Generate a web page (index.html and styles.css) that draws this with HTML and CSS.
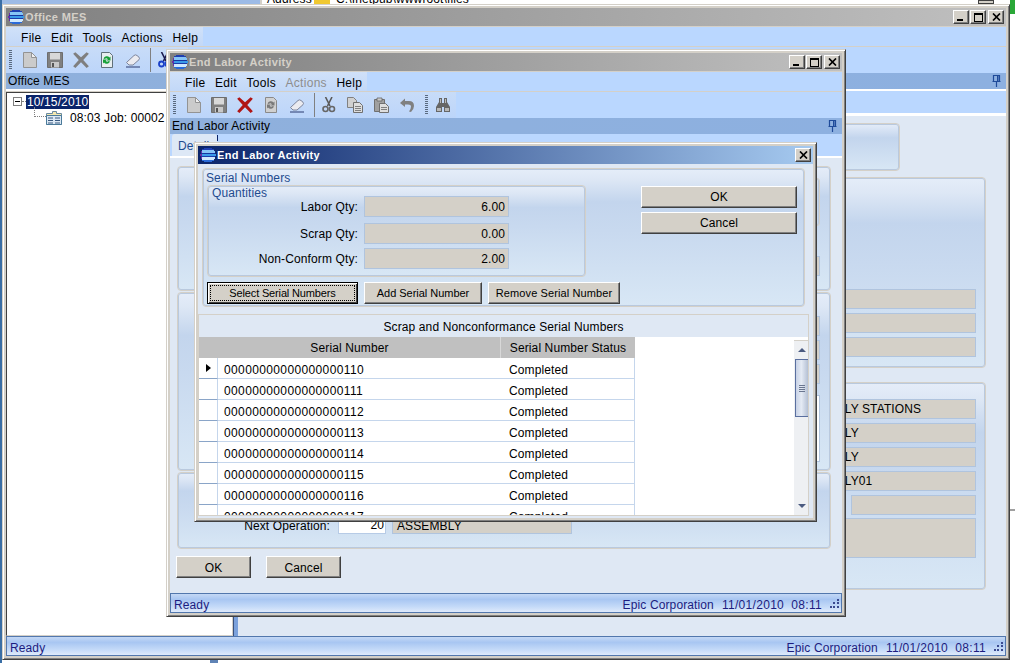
FILE: index.html
```html
<!DOCTYPE html>
<html lang="en">
<head>
<meta charset="utf-8">
<title>Office MES</title>
<link rel="stylesheet" href="styles.css">
</head>
<body>
<svg class="sprite" xmlns="http://www.w3.org/2000/svg">
  <symbol id="logo" viewBox="0 0 16 14">
    <path d="M4 0h8v1h2v1H2V1h2z" fill="#1f3fb0"/>
    <path d="M2 2h12v1h1v2H1V3h1z" fill="#86c4f6"/>
    <path d="M1 5h14v1H1z" fill="#1636a0"/>
    <path d="M0 6h16v2H0z" fill="#3a9ae8"/>
    <path d="M1 8h14v1H1z" fill="#1a3cac"/>
    <path d="M1 9h14v2h-1v1H2v-1H1z" fill="#cfe8fd"/>
    <path d="M2 12h12v1h-2v1H4v-1H2z" fill="#2a6ad8"/>
    <path d="M0 6h2v2H0zM1 3h1v2H1zM1 9h1v2H1z" fill="#6a2ca8"/>
  </symbol>
  <symbol id="g-x" viewBox="0 0 9 8"><path d="M1 .5 8 7.500M8 .5 1 7.500" stroke="#000" stroke-width="1.700" fill="none"/></symbol>
  <symbol id="i-new" viewBox="0 0 14 16"><path d="M.5.500h8l5 5v10H.5z" fill="#cbcbcb" stroke="#939393"/><path d="M8.500.5v5h5z" fill="#efefef" stroke="#939393"/></symbol>
  <symbol id="i-save" viewBox="0 0 16 16"><path d="M.5.500h15v15H.5z" fill="#808080" stroke="#6e6e6e"/><path d="M3 1h10v6.500H3z" fill="#d8d8d8"/><path d="M4 10h8v5.500H4z" fill="#c8c8c8"/><path d="M5 11h2v4H5z" fill="#555"/></symbol>
  <symbol id="i-x" viewBox="0 0 16 16"><path d="M1 2.500 3 1l5 4.500L13 1l2 1.500L10 8l5 5.500-2 1.500-5-5-5 5-2-1.500L6 8z"/></symbol>
  <symbol id="i-ref" viewBox="0 0 16 16"><path d="M2.500.500h8l3 3v12h-11z" fill="#e8eef0" stroke="#60707a"/><path d="M4.500 6.500a3.500 3.500 0 0 1 6-1l1-1v4h-4l1.300-1.300a2 2 0 0 0-3-.2zM11 9.500a3.500 3.500 0 0 1-6 1l-1 1v-4h4L6.700 8.800a2 2 0 0 0 3 .2z" fill="#18a038"/></symbol>
  <symbol id="i-refg" viewBox="0 0 16 16"><path d="M2.500.500h8l3 3v12h-11z" fill="#d0d0d0" stroke="#8a8a8a"/><path d="M4.500 6.500a3.500 3.500 0 0 1 6-1l1-1v4h-4l1.300-1.300a2 2 0 0 0-3-.2zM11 9.500a3.500 3.500 0 0 1-6 1l-1 1v-4h4L6.700 8.800a2 2 0 0 0 3 .2z" fill="#7a7a7a"/></symbol>
  <symbol id="i-erase" viewBox="0 0 16 16"><path d="M1.500 10.500 9 3.500q1.500-1.300 3 0l2 1.700q1 1.200 0 2.500l-6 5.300H4z" fill="#ebebf0" stroke="#7d859c"/><path d="M1 15h14" stroke="#2a3a70" fill="none"/></symbol>
  <symbol id="i-cut" viewBox="0 0 16 16"><path d="M4.500 0 9 9M11 0 6.500 9" stroke="#5a5a5a" stroke-width="1.600" fill="none"/><circle cx="4.500" cy="12" r="2.500" fill="none" stroke="#666" stroke-width="1.600"/><circle cx="11" cy="12" r="2.500" fill="none" stroke="#666" stroke-width="1.600"/></symbol>
  <symbol id="i-cutb" viewBox="0 0 16 16"><path d="M4.500 0 9 9M11 0 6.500 9" stroke="#1a1a50" stroke-width="1.600" fill="none"/><circle cx="4.500" cy="12" r="2.500" fill="none" stroke="#1a40c8" stroke-width="1.800"/><circle cx="11" cy="12" r="2.500" fill="none" stroke="#1a40c8" stroke-width="1.800"/></symbol>
  <symbol id="i-copy" viewBox="0 0 16 16"><path d="M.5.500h6l3 3v7h-9z" fill="#d0d0d0" stroke="#808080"/><path d="M6.500 5.500h6l3 3v7h-9z" fill="#dedede" stroke="#707070"/><path d="M8 9.500h6M8 11.500h6M8 13.500h6" stroke="#808080" fill="none"/></symbol>
  <symbol id="i-paste" viewBox="0 0 16 16"><path d="M1.500 2.500h10v12h-10z" fill="#a0a0a0" stroke="#707070"/><path d="M4 1h5v3H4z" fill="#ccc" stroke="#666" stroke-width=".8"/><path d="M6.500 6.500h6l3 3v6h-9z" fill="#dedede" stroke="#707070"/><path d="M8 10.500h6M8 12.500h6" stroke="#808080" fill="none"/></symbol>
  <symbol id="i-undo" viewBox="0 0 16 16"><path d="M1 6 6 1.500V4h4q5 0 5 5 0 3-3 6l-2-.5q2-2.500 2-5 0-2-3-2H6v2.500z" fill="#808080"/></symbol>
  <symbol id="i-find" viewBox="0 0 16 16"><path d="M4 1h3v5h2V1h3v4l3 5v5h-6v-5H7v5H1v-5l3-5z" fill="#666"/><path d="M2 11h4v3H2zM10 11h4v3h-4z" fill="#b8b8b8"/><path d="M5 2h1v4H5zM10 2h1v4h-1z" fill="#bbb"/></symbol>
  <symbol id="i-pin" viewBox="0 0 9 12"><path d="M1.500.500h6v6h-6zM.5 6.500h8M4.500 7v5" fill="none" stroke="#1f4b9a" stroke-width="1.200"/><path d="M5 1h1.500v5H5z" fill="#1f4b9a"/></symbol>
  <symbol id="i-rec" viewBox="0 0 16 14"><path d="M.5 2.500h6V.500h4v2h5v11H.5z" fill="#f4e8b0" stroke="#6a8aa0"/><path d="M.5 4.500h15v9H.5z" fill="#dce8f4" stroke="#4a7a9a"/><path d="M2 7h5M2 9.500h5M2 12h5M9 7h5M9 9.500h5M9 12h5" stroke="#3a5a80" fill="none"/></symbol>
</svg>

<div class="desk-left"></div>
<div class="desk-top-a"></div>
<div class="desk-top-b"><span class="addr">Address</span><span class="folder"></span><span class="addr-path">C:\Inetpub\wwwroot\files</span></div>
<div class="desk-tool"></div>
<div class="desk-go"></div>
<div class="desk-line"></div>
<div class="desk-foot"></div>

<!-- Main window -->
<section class="win win-main">
  <header class="title title-off">
    <svg class="logo"><use href="#logo"/></svg><span class="title-text">Office MES</span>
    <span class="caps"><span class="cap"><i class="g-min"></i></span><span class="cap"><i class="g-max"></i></span><span class="cap cap-x"><svg class="g-x"><use href="#g-x"/></svg></span></span>
  </header>
  <nav class="menubar">
    <div class="menu-band menu-band-main">
      <span class="grip-v"></span>
      <span class="m">File</span><span class="m">Edit</span><span class="m">Tools</span><span class="m">Actions</span><span class="m">Help</span>
    </div>
  </nav>
  <div class="toolbar">
    <div class="tool-band">
      <span class="grip-t"></span>
      <svg class="ic ic-n"><use href="#i-new"/></svg>
      <svg class="ic"><use href="#i-save"/></svg>
      <svg class="ic ic-gx"><use href="#i-x"/></svg>
      <svg class="ic"><use href="#i-ref"/></svg>
      <svg class="ic"><use href="#i-erase"/></svg>
      <span class="tsep"></span>
      <svg class="ic"><use href="#i-cutb"/></svg>
    </div>
  </div>
  <div class="panehead"><span>Office MES</span><svg class="pin"><use href="#i-pin"/></svg></div>
  <div class="main-split">
    <aside class="tree">
      <div class="node-date"><span class="exp"></span><span class="dash"></span><span class="sel">10/15/2010</span></div>
      <div class="node-job"><span class="elbow"></span><svg class="rec"><use href="#i-rec"/></svg><span>08:03 Job: 00002</span></div>
    </aside>
    <div class="splitter"></div>
    <div class="right-pane">
      <div class="tabband"></div>
      <div class="right-body">
        <div class="grp grp-r1"></div>
        <div class="grp grp-r2">
          <div class="bg-f"></div><div class="bg-f"></div><div class="bg-f"></div>
        </div>
        <div class="grp grp-r3">
          <div class="bg-f">ASSEMBLY STATIONS</div>
          <div class="bg-f">ASSEMBLY</div>
          <div class="bg-f">ASSEMBLY</div>
          <div class="bg-f">ASSEMBLY01</div>
          <div class="bg-f bg-f-short"></div>
          <div class="bg-f bg-f-tall"></div>
        </div>
      </div>
    </div>
  </div>
  <footer class="status"><span>Ready</span><span class="st-right">Epic Corporation</span><span class="st-date">11/01/2010&nbsp; 08:11</span><span class="st-grip"></span></footer>
</section>

<!-- Middle window -->
<section class="win win-mid">
  <header class="title title-off">
    <svg class="logo"><use href="#logo"/></svg><span class="title-text">End Labor Activity</span>
    <span class="caps"><span class="cap"><i class="g-min"></i></span><span class="cap"><i class="g-max"></i></span><span class="cap cap-x"><svg class="g-x"><use href="#g-x"/></svg></span></span>
  </header>
  <nav class="menubar">
    <div class="menu-band menu-band-mid">
      <span class="grip-v"></span>
      <span class="m">File</span><span class="m">Edit</span><span class="m">Tools</span><span class="m m-off">Actions</span><span class="m">Help</span>
    </div>
  </nav>
  <div class="toolbar">
    <div class="tool-band">
      <span class="grip-t"></span>
      <svg class="ic ic-n"><use href="#i-new"/></svg>
      <svg class="ic"><use href="#i-save"/></svg>
      <svg class="ic ic-rx"><use href="#i-x"/></svg>
      <svg class="ic"><use href="#i-refg"/></svg>
      <svg class="ic"><use href="#i-erase"/></svg>
      <span class="tsep"></span>
      <svg class="ic"><use href="#i-cut"/></svg>
      <svg class="ic"><use href="#i-copy"/></svg>
      <svg class="ic"><use href="#i-paste"/></svg>
      <svg class="ic"><use href="#i-undo"/></svg>
      <span class="grip-t grip-t2"></span>
      <svg class="ic"><use href="#i-find"/></svg>
    </div>
  </div>
  <div class="panehead"><span>End Labor Activity</span><svg class="pin"><use href="#i-pin"/></svg></div>
  <div class="tabstrip"><span class="tab">Details</span><span class="tab-tick"></span></div>
  <div class="mid-body">
    <div class="grp grp-m1"><div class="sub-m"></div><div class="m-f m-f-1"></div></div>
    <div class="grp grp-m2">
      <div class="m-f"></div><div class="m-f"></div><div class="m-f"></div><div class="m-white"></div>
    </div>
    <div class="grp grp-m3">
      <div class="next-row"><span class="next-label">Next Operation:</span><span class="next-input">20</span><span class="next-field">ASSEMBLY</span></div>
    </div>
    <div class="mid-btns"><button class="btn btn-m">OK</button><button class="btn btn-m">Cancel</button></div>
  </div>
  <footer class="status"><span>Ready</span><span class="st-right">Epic Corporation</span><span class="st-date">11/01/2010&nbsp; 08:11</span><span class="st-grip"></span></footer>
</section>

<!-- Dialog -->
<section class="win win-dlg">
  <header class="title title-on">
    <svg class="logo"><use href="#logo"/></svg><span class="title-text">End Labor Activity</span>
    <span class="caps"><span class="cap cap-x"><svg class="g-x"><use href="#g-x"/></svg></span></span>
  </header>
  <div class="dlg-body">
    <div class="grp ser-group">
      <div class="grp-title">Serial Numbers</div>
      <div class="ser-cols">
        <div class="ser-left">
          <div class="grp qty">
            <div class="grp-title qty-title">Quantities</div>
            <div class="qty-row"><label>Labor Qty:</label><span class="ro">6.00</span></div>
            <div class="qty-row"><label>Scrap Qty:</label><span class="ro">0.00</span></div>
            <div class="qty-row qty-row-tight"><label>Non-Conform Qty:</label><span class="ro">2.00</span></div>
          </div>
          <div class="ser-btns">
            <button class="btn btn-focus"><span>Select Serial Numbers</span></button>
            <button class="btn btn-add">Add Serial Number</button>
            <button class="btn btn-rem">Remove Serial Number</button>
          </div>
        </div>
        <div class="ser-right">
          <button class="btn btn-wide">OK</button>
          <button class="btn btn-wide">Cancel</button>
        </div>
      </div>
    </div>
    <div class="grid-panel">
      <div class="grid-cap">Scrap and Nonconformance Serial Numbers</div>
      <div class="grid-area">
        <div class="grid-table">
          <div class="g-head"><span class="gh-a">Serial Number</span><span class="gh-b">Serial Number Status</span></div>
          <div class="g-row"><span class="g-rh"><i class="cur"></i></span><span class="g-a">00000000000000000110</span><span class="g-b">Completed</span></div>
          <div class="g-row"><span class="g-rh"></span><span class="g-a">00000000000000000111</span><span class="g-b">Completed</span></div>
          <div class="g-row"><span class="g-rh"></span><span class="g-a">00000000000000000112</span><span class="g-b">Completed</span></div>
          <div class="g-row"><span class="g-rh"></span><span class="g-a">00000000000000000113</span><span class="g-b">Completed</span></div>
          <div class="g-row"><span class="g-rh"></span><span class="g-a">00000000000000000114</span><span class="g-b">Completed</span></div>
          <div class="g-row"><span class="g-rh"></span><span class="g-a">00000000000000000115</span><span class="g-b">Completed</span></div>
          <div class="g-row"><span class="g-rh"></span><span class="g-a">00000000000000000116</span><span class="g-b">Completed</span></div>
          <div class="g-row"><span class="g-rh"></span><span class="g-a">00000000000000000117</span><span class="g-b">Completed</span></div>
        </div>
        <div class="grid-empty"></div>
        <div class="vscroll">
          <span class="sb-cap"></span>
          <span class="sb-btn"><i class="arr-up"></i></span>
          <span class="sb-thumb"><i class="sb-lines"></i></span>
          <span class="sb-fill"></span>
          <span class="sb-btn"><i class="arr-down"></i></span>
        </div>
      </div>
    </div>
  </div>
</section>
</body>
</html>
```

FILE: styles.css
```css
* { box-sizing: border-box; }
html, body { margin: 0; padding: 0; }
body {
  width: 1015px; height: 663px; overflow: hidden; position: relative; background: #fff;
  font: 12px/1 "Liberation Sans", Arial, sans-serif; letter-spacing: .12px; color: #000;
}
.sprite { display: none; }

/* desktop bits behind the windows */
.desk-left { position: absolute; left: 0; top: 0; width: 2px; height: 663px; background: #3a6ea5; }
.desk-top-a { position: absolute; left: 2px; top: 0; width: 258px; height: 4px; background: #9dbbe6; }
.desk-top-b { position: absolute; left: 260px; top: 0; width: 755px; height: 4px; overflow: hidden; background: #fff; border-left: 2px solid #d4d0c8; }
.addr { position: absolute; left: 5px; top: -7px; }
.folder { position: absolute; left: 52px; top: 0; width: 16px; height: 4px; background: #f0c830; }
.addr-path { position: absolute; left: 74px; top: -7px; }
.desk-tool { position: absolute; left: 978px; top: 0; width: 16px; height: 4px; background: #d4d0c8; border: 1px solid #404040; }
.desk-go { position: absolute; left: 1010px; top: 0; width: 5px; height: 14px; background: #2aa838; }
.desk-line { position: absolute; left: 1010px; top: 509px; width: 5px; height: 2px; background: #a0a0a0; }
.desk-foot { position: absolute; left: 210px; top: 660px; width: 8px; height: 3px; background: #5f83b5; }

/* windows */
.win {
  position: absolute; display: flex; flex-direction: column; padding: 3px;
  background: #d4d0c8; border: 1px solid; border-color: #d4d0c8 #404040 #404040 #d4d0c8;
  box-shadow: inset 1px 1px 0 #fff, inset -1px -1px 0 #808080;
}
.win-main { left: 2px; top: 4px; width: 1008px; height: 656px; }
.win-mid { left: 166px; top: 49px; width: 680px; height: 568px; }
.win-dlg { left: 194px; top: 142px; width: 623px; height: 380px; }

.title {
  flex: none; height: 18px; display: flex; align-items: center; padding: 0 2px;
  font-weight: 700; font-size: 11px; letter-spacing: .35px;
}
.title-off { background: linear-gradient(90deg, #808080, #c0c0c0); color: #d4d0c8; }
.title-on { background: linear-gradient(90deg, #0a246a, #a6caf0); color: #fff; }
.logo { width: 16px; height: 14px; margin-right: 1px; flex: none; }
.title-text { white-space: nowrap; }
.caps { margin-left: auto; display: flex; margin-right: 0; }
.cap {
  width: 16px; height: 14px; margin-left: 1px; display: flex; align-items: center; justify-content: center;
  background: #d4d0c8; border: 1px solid; border-color: #fff #404040 #404040 #fff;
  box-shadow: inset -1px -1px 0 #808080; position: relative;
}
.cap-x { margin-left: 2px; }
.g-x { width: 9px; height: 8px; }
.g-min { position: absolute; left: 3px; bottom: 2px; width: 6px; height: 2px; background: #000; }
.g-max { width: 9px; height: 9px; border: 1px solid #000; border-top-width: 2px; }

.menubar { flex: none; height: 19px; margin-top: 1px; background: #bad7ff; display: flex; }
.menu-band { display: flex; align-items: center; height: 19px; background: linear-gradient(180deg, #d0e1f9, #c2d8f8); padding-left: 4px; }
.menu-band-main { width: 197px; }
.menu-band-mid { width: 197px; }
.grip-v { width: 2px; height: 12px; margin-right: 11px; background: repeating-linear-gradient(180deg, #6a7a90 0 1px, transparent 1px 2px); }
.m { margin-right: 9.5px; white-space: nowrap; padding-top: 2px; letter-spacing: .3px; }
.m-off { color: #8d8d8d; }

.toolbar { flex: none; height: 26px; margin-top: 1px; background: #bad7ff; display: flex; }
.tool-band { display: flex; align-items: center; height: 26px; background: linear-gradient(180deg, #c8dcf8, #bcd5fa); padding-left: 3px; }
.win-main .tool-band { padding-right: 10px; }
.grip-t { width: 3px; height: 20px; margin-right: 5px; background: repeating-linear-gradient(180deg, #5a6a80 0 1px, transparent 1px 2px); }
.grip-t2 { margin-left: 5px; margin-right: 2px; }
.ic { width: 16px; height: 16px; margin: 0 5px; flex: none; }
.ic-n { width: 14px; margin: 0 5px 0 6px; }
.ic-gx { fill: #7f7f7f; width: 18px; height: 18px; margin: 0 4px; }
.ic-rx { fill: #b01515; width: 18px; height: 18px; margin: 0 4px; }
.tsep { width: 1px; height: 24px; margin: 0 1px 0 4px; background: #808080; }

.panehead {
  flex: none; height: 16px; display: flex; align-items: center; justify-content: space-between;
  padding: 0 5px 0 2px; background: linear-gradient(90deg, #8fb0dc, #8db0e0);
}
.pin { width: 9px; height: 12px; }

.main-split { flex: 1; display: flex; min-height: 0; border-top: 2px solid #fff; }
.tree {
  width: 227px; flex: none; margin: 1px 0 0 0; background: #fff; overflow: hidden;
  border: 1px solid; border-color: #404040 #d4d0c8 #d4d0c8 #404040; padding: 1px 0 0 6px;
}
.node-date { display: flex; align-items: center; height: 15px; }
.exp { width: 9px; height: 9px; border: 1px solid #808080; flex: none; background: linear-gradient(#000, #000) center/5px 1px no-repeat; }
.dash { width: 4px; border-top: 1px dotted #808080; flex: none; }
.sel { background: #0a246a; color: #fff; height: 14px; line-height: 14px; padding: 0 1px; }
.node-job { display: flex; align-items: center; height: 18px; padding-left: 16px; }
.elbow { width: 12px; height: 10px; margin-top: -12px; margin-left: 5px; border-left: 1px dotted #808080; border-bottom: 1px dotted #808080; flex: none; }
.rec { width: 16px; height: 14px; margin-right: 8px; flex: none; }
.splitter { width: 5px; flex: none; background: #7ba1dc; border-left: 1px solid #39507c; }
.right-pane { flex: 1; min-width: 0; display: flex; flex-direction: column; }
.tabband { flex: none; height: 22px; background: #bad7ff; }
.right-body {
  flex: 1; border-top: 3px solid #fff; background: #dfe8f4; padding: 7px 20px 0 0;
  display: flex; flex-direction: column; align-items: flex-end;
}

/* gradient group boxes */
.grp {
  border: 1px solid #d4d0c8; border-radius: 4px; flex: none;
  box-shadow: inset 0 0 0 1px #b9c9de;
  background: linear-gradient(180deg, #e5edf9 0, #dde7f5 8%, #c3d5ed 24%, #c8d9ef 45%, #d8e7f5 100%);
}
.grp-r1 { width: 210px; height: 48px; margin-right: 86px; background: linear-gradient(180deg, #e5edf9 0, #c3d5ed 30%, #d8e7f5 100%); }
.grp-r2 { width: 296px; height: 191px; margin-top: 6px; padding: 111px 9px 0 10px; }
.grp-r3 { width: 296px; height: 208px; margin-top: 14px; padding: 16px 9px 0 10px; }
.bg-f { height: 20px; margin-bottom: 4px; background: #d4d0c8; border: 1px solid #b0c4de; padding: 3px 0 0 92px; white-space: nowrap; }
.bg-f-short { margin-left: 150px; }
.bg-f-tall { height: 40px; margin-top: -1px; }

.tabstrip { flex: none; height: 24px; background: #bad7ff; border-bottom: 2px solid #fff; display: flex; padding-left: 2px; }
.tab { width: 45px; height: 22px; background: #dde8f6; color: #1f4b8f; padding: 6px 0 0 6px; white-space: nowrap; border-radius: 3px 3px 0 0; }
.tab-tick { width: 1px; height: 6px; margin: 1px 0 0 0; background: #0a246a; }
.mid-body { flex: 1; min-height: 0; background: #dfe8f4; padding: 8px 0 0 7px; }
.grp-m1 { width: 654px; height: 125px; padding: 11px 10px 0 0; display: flex; flex-direction: column; align-items: flex-end; }
.sub-m { width: 300px; height: 48px; border: 1px solid #d4d0c8; box-shadow: inset 0 0 0 1px #b9c9de; border-radius: 3px; }
.m-f { width: 400px; height: 20px; background: #d4d0c8; border: 1px solid #b0c4de; margin-bottom: 4px; }
.m-f-1 { margin-top: 30px; }
.grp-m2 { width: 654px; height: 179px; margin-top: 1px; padding: 23px 10px 0 0; display: flex; flex-direction: column; align-items: flex-end; }
.m-white { width: 400px; height: 67px; margin-top: 7px; background: #fff; border: 1px solid #b0c4de; }
.grp-m3 { width: 654px; height: 77px; margin-top: 1px; padding-top: 42px; }
.next-row { display: flex; height: 19px; align-items: flex-end; }
.next-label { width: 152px; text-align: right; margin-right: 8px; height: 19px; line-height: 23px; }
.next-input { width: 48px; height: 19px; line-height: 19px; text-align: right; background: #fff; border: 1px solid #b7cbe6; padding-right: 1px; margin-right: 6px; }
.next-field { width: 180px; height: 18px; background: #d4d0c8; border: 1px solid #b0c4de; padding: 3px 0 0 4px; }
.mid-btns { display: flex; gap: 15px; margin-top: 7px; margin-left: -1px; }

.btn {
  height: 22px; padding: 0; background: #d4d0c8; color: #000; font: inherit; letter-spacing: inherit; white-space: nowrap;
  border: 1px solid; border-color: #fff #404040 #404040 #fff; box-shadow: inset -1px -1px 0 #808080; flex: none;
}
.btn-m { width: 75px; padding-top: 1px; }
.btn-wide { width: 156px; display: block; }
.btn-wide + .btn-wide { margin-top: 4px; }
.btn-focus { width: 151px; border: 1px solid #000; box-shadow: inset 1px 1px 0 #fff, inset -1px -1px 0 #404040; padding: 2px; font-size: 11px; letter-spacing: -.15px; }
.btn-focus span { display: block; height: 16px; line-height: 14px; border: 1px dotted #000; }
.btn-add { width: 118px; font-size: 11px; letter-spacing: -.03px; }
.btn-rem { width: 132px; font-size: 11px; letter-spacing: .1px; }

.status {
  flex: none; height: 20px; display: flex; align-items: center; padding: 3px 2px 0 3px;
  border: 1px solid #5277ad; color: #1c1c80;
  background: linear-gradient(180deg, #c4d8f5 0, #a8c6f2 30%, #c4daf8 70%, #dfeafb 100%);
}
.st-right { margin-left: auto; }
.st-date { margin-left: 8px; letter-spacing: .3px; }
.st-grip { width: 9px; height: 9px; margin: -3px 0 0 8px; background:
  linear-gradient(#3a4a90,#3a4a90) 7px 0/2px 2px no-repeat,
  linear-gradient(#3a4a90,#3a4a90) 7px 3px/2px 2px no-repeat,
  linear-gradient(#3a4a90,#3a4a90) 7px 7px/2px 2px no-repeat,
  linear-gradient(#3a4a90,#3a4a90) 3px 3px/2px 2px no-repeat,
  linear-gradient(#3a4a90,#3a4a90) 3px 7px/2px 2px no-repeat,
  linear-gradient(#3a4a90,#3a4a90) 0 7px/2px 2px no-repeat; }

/* dialog */
.dlg-body { flex: 1; min-height: 0; background: #dfe8f4; padding: 4px 0 0 0; }
.ser-group { margin: 0 8px 0 4px; height: 139px; padding: 3px 7px 0 4px; }
.grp-title { color: #1f4b8f; height: 12px; line-height: 12px; margin-left: -1px; }
.ser-cols { display: flex; }
.ser-left { width: 413px; flex: none; }
.ser-right { margin-left: 21px; padding-top: 2px; }
.qty { width: 379px; height: 92px; margin-top: 1px; padding: 1px 0 0 0; }
.qty-title { margin: 0 0 -3px 4px; }
.qty-row { display: flex; height: 21px; margin-top: 6px; }
.qty-row:nth-child(2) { margin-top: 0; }
.qty-row-tight { margin-top: 4px; }
.qty-row label { width: 150px; margin-right: 6px; text-align: right; line-height: 22px; }
.ro { width: 145px; height: 21px; line-height: 20px; text-align: right; padding-right: 3px; background: #d4d0c8; border: 1px solid #b0c4de; }
.ser-btns { display: flex; gap: 6px; margin-top: 5px; }

.grid-panel { margin: 7px 4px 0 0; height: 202px; border: 1px solid #d4d0c8; display: flex; flex-direction: column; overflow: hidden; }
.grid-cap { flex: none; height: 22px; line-height: 24px; text-align: center; }
.grid-area { flex: 1; min-height: 0; display: flex; background: #fff; overflow: hidden; }
.grid-table { width: 436px; flex: none; }
.g-head { display: flex; height: 21px; background: #c0c0c0; line-height: 23px; text-align: center; }
.gh-a { width: 302px; border-right: 1px solid #d8d8d8; }
.gh-b { width: 134px; }
.g-row { display: flex; height: 21px; line-height: 24px; }
.g-rh { width: 19px; flex: none; border-right: 1px solid #c5d6ec; border-bottom: 1px solid #8aa5c8; position: relative; }
.cur { position: absolute; left: 7px; top: 6px; border-left: 5px solid #000; border-top: 4px solid transparent; border-bottom: 4px solid transparent; }
.g-a { width: 283px; flex: none; padding-left: 6px; border-bottom: 1px solid #c5d6ec; letter-spacing: .37px; overflow: hidden; }
.g-b { width: 134px; flex: none; padding-left: 8px; border-bottom: 1px solid #c5d6ec; border-right: 1px solid #c5d6ec; overflow: hidden; }
.grid-empty { width: 159px; flex: none; }
.vscroll { width: 15px; flex: none; display: flex; flex-direction: column; background: #eef0f3; align-items: center; }
.sb-cap { width: 15px; height: 4px; background: #fff; border-bottom: 1px solid #d4d0c8; flex: none; }
.sb-btn { height: 18px; flex: none; display: flex; align-items: center; justify-content: center; }
.arr-up { border-left: 4px solid transparent; border-right: 4px solid transparent; border-bottom: 4px solid #4a5a80; }
.arr-down { border-left: 4px solid transparent; border-right: 4px solid transparent; border-top: 4px solid #4a5a80; }
.sb-thumb { width: 14px; height: 58px; flex: none; border: 1px solid #5a6f9f; background: linear-gradient(90deg, #c8d2e6, #e4eaf4 45%, #b4c0d4); display: flex; align-items: center; justify-content: center; }
.sb-lines { width: 6px; height: 7px; background: repeating-linear-gradient(180deg, #6a7690 0 1px, transparent 1px 2px); }
.sb-fill { flex: 1; }
```
